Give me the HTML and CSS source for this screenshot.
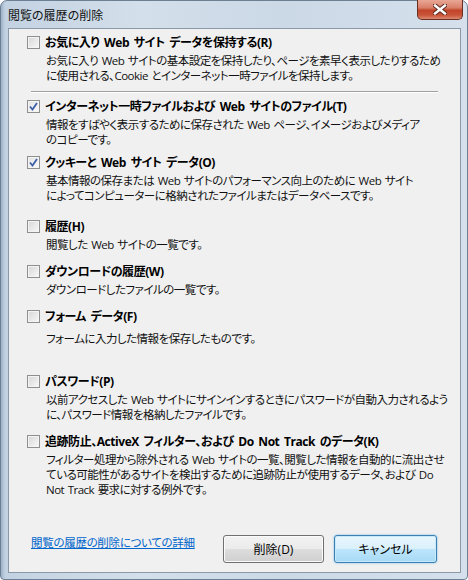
FILE: index.html
```html
<!DOCTYPE html>
<html lang="ja">
  <head>
    <meta charset="UTF-8" />
    <meta name="viewport" content="width=device-width, initial-scale=1.0" />
    <title>閲覧の履歴の削除</title>
    <link rel="stylesheet" href="styles.css">
  </head>
  <body>
    <div class="window">
      <div class="titlebar">
        <span class="title">閲覧の履歴の削除</span>
        <button type="button" class="close" aria-label="閉じる">
          <svg width="14" height="11" viewBox="0 0 14 11">
            <path d="M2 1.5 L12 9.5 M12 1.5 L2 9.5" stroke="#5a2a20" stroke-width="4.4" stroke-linecap="square" />
            <path d="M2 1.5 L12 9.5 M12 1.5 L2 9.5" stroke="#fff" stroke-width="2.4" stroke-linecap="square" />
          </svg>
        </button>
      </div>

      <div class="content">
        <!-- お気に入り -->
        <div class="option">
          <label class="option-head"><span class="box"></span>お気に入り Web サイト データを保持する(R)</label>
          <p class="desc">お気に入り Web サイトの基本設定を保持したり、ページを素早く表示したりするため<br>に使用される、Cookie とインターネット一時ファイルを保持します。</p>
        </div>

        <hr class="sep" />

        <div class="option first">
          <label class="option-head"><span class="box checked"><svg width="9" height="9" viewBox="0 0 9 9"><path d="M1 4.5 L3.5 7.5 L8 1" fill="none" stroke="#3d5ea8" stroke-width="1.8" /></svg></span>インターネット一時ファイルおよび Web サイトのファイル(T)</label>
          <p class="desc">情報をすばやく表示するために保存された Web ページ、イメージおよびメディア<br>のコピーです。</p>
        </div>

        <div class="option tight">
          <label class="option-head"><span class="box checked"><svg width="9" height="9" viewBox="0 0 9 9"><path d="M1 4.5 L3.5 7.5 L8 1" fill="none" stroke="#3d5ea8" stroke-width="1.8" /></svg></span>クッキーと Web サイト データ(O)</label>
          <p class="desc">基本情報の保存または Web サイトのパフォーマンス向上のために Web サイト<br>によってコンピューターに格納されたファイルまたはデータベースです。</p>
        </div>

        <div class="option loose">
          <label class="option-head"><span class="box"></span>履歴(H)</label>
          <p class="desc">閲覧した Web サイトの一覧です。</p>
        </div>

        <div class="option">
          <label class="option-head"><span class="box"></span>ダウンロードの履歴(W)</label>
          <p class="desc">ダウンロードしたファイルの一覧です。</p>
        </div>

        <div class="option">
          <label class="option-head"><span class="box"></span>フォーム データ(F)</label>
          <p class="desc far">フォームに入力した情報を保存したものです。</p>
        </div>

        <div class="option spaced">
          <label class="option-head"><span class="box"></span>パスワード(P)</label>
          <p class="desc">以前アクセスした Web サイトにサインインするときにパスワードが自動入力されるよう<br>に、パスワード情報を格納したファイルです。</p>
        </div>

        <div class="option">
          <label class="option-head"><span class="box"></span>追跡防止、ActiveX フィルター、および Do Not Track のデータ(K)</label>
          <p class="desc">フィルター処理から除外される Web サイトの一覧、閲覧した情報を自動的に流出させ<br>ている可能性があるサイトを検出するために追跡防止が使用するデータ、および Do<br>Not Track 要求に対する例外です。</p>
        </div>

        <div class="footer">
          <a href="#" class="more">閲覧の履歴の削除についての詳細</a>
          <div class="buttons">
            <button type="button" class="btn">削除(D)</button>
            <button type="button" class="btn default">キャンセル</button>
          </div>
        </div>
      </div>
    </div>
  </body>
</html>
```

FILE: styles.css
```css
body {
  margin: 0;
  padding: 0;
  font-family: "Open Sans", "Noto Sans CJK JP", sans-serif;
  font-size: 12px;
  color: #000;
  background: #fff;
}

.window {
  width: 468px;
  height: 580px;
  box-sizing: border-box;
  padding: 0 6px 6px 7px;
  display: flex;
  flex-direction: column;
  border: 1px solid #6d7f93;
  border-radius: 7px 7px 4px 4px;
  background: linear-gradient(90deg, #9cb0c6 0, #c3d2e2 4px, #d3dfea 30%, #cbd8e6 60%, #d5e0ec 100%);
  font-feature-settings: "palt";
}

.titlebar {
  height: 27px;
  display: flex;
  align-items: flex-start;
}

.title {
  padding: 6px 0 0 0;
  line-height: 16px;
  color: #111;
  font-family: "Noto Sans CJK JP", sans-serif;
}

.close {
  margin: -1px -2px 0 auto;
  width: 46px;
  height: 20px;
  padding: 0;
  border: 1px solid #6b2e22;
  border-top: none;
  border-radius: 0 0 5px 5px;
  background: linear-gradient(#e9a796 0, #d9806a 40%, #c2442a 55%, #c9553a 80%, #dc8a70 100%);
  display: flex;
  align-items: center;
  justify-content: center;
}

.content {
  flex: 1;
  display: flex;
  flex-direction: column;
  padding: 4px 23px 9px 18px;
  background: #f0f0f0;
  border: 1px solid #8a98a8;
}

.option {
  margin-top: 10px;
}

.option:first-child,
.option.first {
  margin-top: 0;
}

.option.tight {
  margin-top: 6px;
}

.option.loose {
  margin-top: 14px;
}

.option.spaced {
  margin-top: 26px;
}

.option-head {
  display: flex;
  align-items: center;
  gap: 4px;
  height: 18px;
  font-weight: bold;
  letter-spacing: -0.45px;
  word-spacing: 2px;
  white-space: nowrap;
}

.box {
  width: 11px;
  height: 11px;
  border: 1px solid #8e8f8f;
  background: linear-gradient(135deg, #d6d6d6, #f9f9f9);
  box-shadow: inset 0 0 0 1px #f4f4f4;
  display: flex;
  align-items: center;
  justify-content: center;
  flex: none;
  margin-right: 1px;
}

.box.checked {
  background: linear-gradient(135deg, #e2e2e2, #fbfbfb);
}

.desc {
  margin: 2px 0 0 19px;
  font-size: 11.5px;
  letter-spacing: -0.5px;
  word-spacing: 1px;
  line-height: 15px;
  white-space: nowrap;
  color: #111;
}

.desc.far {
  margin-top: 6px;
}

.sep {
  margin: 8px 0 4px 4px;
  width: 407px;
  border: none;
  border-top: 1px solid #a0a0a0;
  border-bottom: 1px solid #fff;
}

.footer {
  margin-top: auto;
  display: flex;
  align-items: center;
  padding-left: 4px;
}

.more {
  color: #0066cc;
  text-decoration: underline;
  font-size: 11.5px;
  letter-spacing: -0.3px;
  line-height: 16px;
  margin-top: -13px;
}

.buttons {
  margin-left: auto;
  display: flex;
  gap: 10px;
}

.btn {
  width: 101px;
  height: 28px;
  font-family: inherit;
  font-size: 12px;
  color: #000;
  border: 1px solid #707070;
  border-radius: 3px;
  background: linear-gradient(#f2f2f2 0, #ebebeb 50%, #dddddd 50%, #cfcfcf 100%);
  box-shadow: inset 0 0 0 1px #fbfbfb;
  font-feature-settings: "palt";
}

.btn.default {
  width: 103px;
  border-color: #3c7fb1;
  background: linear-gradient(#eaf6fd 0, #d9f0fc 50%, #bee6fd 50%, #a7d9f5 100%);
  box-shadow: inset 0 0 0 1px #c6eafc, 0 0 2px #62b4e6;
}
```
